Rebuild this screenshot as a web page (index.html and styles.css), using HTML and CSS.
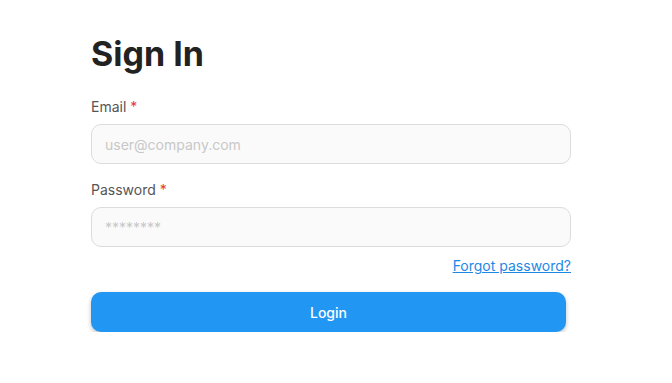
FILE: index.html
```html
<!DOCTYPE html>
<html lang="en">

<head>
  <meta charset="UTF-8">
  <meta name="viewport" content="width=device-width, initial-scale=1.0">
  <link rel="stylesheet" href="styles.css">
  <title>Sign In</title>
</head>

<body>
  <div class="page">
    <form class="login">
      <h1 class="title">Sign In</h1>
      <label class="label" for="email">Email <span class="req">*</span></label>
      <input class="field" id="email" type="email" placeholder="user@company.com">
      <label class="label" for="password">Password <span class="req">*</span></label>
      <input class="field" id="password" type="password" placeholder="********">
      <div class="forgot-row">
        <a class="forgot" href="#">Forgot password?</a>
      </div>
      <button class="btn" type="button">Login</button>
    </form>
  </div>
</body>
</html>
```

FILE: styles.css
```css
html,
body {
  margin: 0;
  background: #fff;
  font-family: Inter, Roboto, "Liberation Sans", sans-serif;
}

.page {
  padding: 34px 0 0 91px;
}

.login {
  display: flex;
  flex-direction: column;
  width: 480px;
}

.title {
  margin: 0 0 23px;
  font-size: 34px;
  line-height: 40px;
  font-weight: 700;
  color: #222;
}

.label {
  font-size: 14px;
  line-height: 20px;
  color: #555;
  margin-bottom: 7px;
}

.req {
  color: #e53935;
}

.field {
  box-sizing: border-box;
  height: 40px;
  margin: 0 0 16px;
  padding: 0 13px;
  border: 1px solid #dcdcdc;
  border-radius: 10px;
  background: #fafafa;
  font-family: inherit;
  font-size: 14px;
  color: #333;
  outline: none;
}

.field::placeholder {
  color: #c8c8c8;
}

.forgot-row {
  display: flex;
  justify-content: flex-end;
  margin-top: -7px;
}

.forgot {
  font-size: 14px;
  line-height: 20px;
  color: #1e88e5;
}

.btn {
  width: 475px;
  height: 40px;
  margin-top: 16px;
  border: none;
  border-radius: 10px;
  background: #2196f3;
  color: #fff;
  font-family: inherit;
  font-size: 14px;
  font-weight: 500;
  box-shadow: 0 2px 4px rgba(0, 0, 0, 0.25);
  cursor: pointer;
}
```
